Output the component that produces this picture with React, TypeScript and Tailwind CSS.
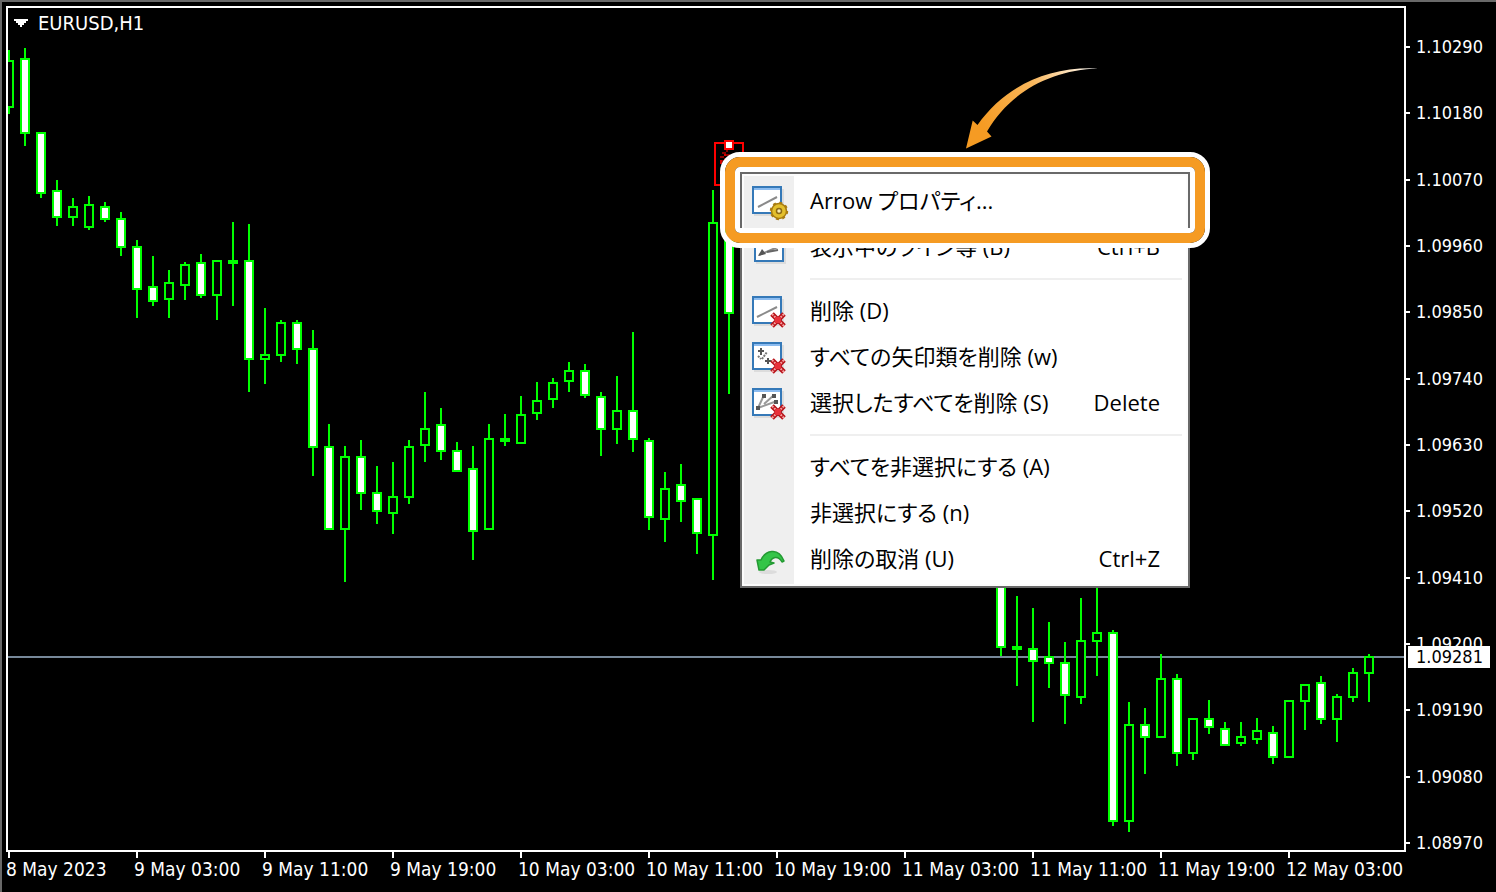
import React from "react";

type Candle = {
  x: number;
  high: number;
  top: number;
  bottom: number;
  low: number;
  bear: boolean;
};

const BAR_STEP = 16;
const FIRST_BAR = 9;

// [bar index, high, body top, body bottom, low, bearish]
const bars: [number, number, number, number, number, 0 | 1][] = [
  [0, 50, 60, 108, 114, 0],
  [1, 48, 58, 134, 146, 1],
  [2, 132, 132, 194, 198, 1],
  [3, 180, 190, 218, 226, 1],
  [4, 198, 206, 218, 226, 0],
  [5, 196, 204, 228, 230, 0],
  [6, 202, 206, 220, 222, 1],
  [7, 212, 218, 248, 256, 1],
  [8, 240, 246, 290, 318, 1],
  [9, 256, 286, 302, 306, 1],
  [10, 270, 282, 300, 318, 0],
  [11, 262, 264, 286, 300, 0],
  [12, 254, 262, 296, 298, 1],
  [13, 260, 260, 296, 320, 0],
  [14, 222, 260, 264, 306, 0],
  [15, 224, 260, 360, 392, 1],
  [16, 308, 354, 360, 384, 0],
  [17, 320, 322, 356, 362, 0],
  [18, 320, 322, 350, 364, 1],
  [19, 330, 348, 448, 476, 1],
  [20, 424, 446, 530, 530, 1],
  [21, 446, 456, 530, 582, 0],
  [22, 440, 456, 494, 510, 1],
  [23, 466, 492, 512, 524, 1],
  [24, 462, 496, 514, 534, 0],
  [25, 440, 446, 498, 504, 0],
  [26, 392, 428, 446, 462, 0],
  [27, 408, 424, 452, 460, 1],
  [28, 442, 450, 472, 472, 1],
  [29, 446, 468, 532, 560, 1],
  [30, 424, 438, 530, 530, 0],
  [31, 414, 438, 442, 446, 0],
  [32, 396, 414, 444, 444, 0],
  [33, 382, 400, 414, 420, 0],
  [34, 378, 382, 400, 408, 0],
  [35, 362, 370, 382, 392, 0],
  [36, 364, 370, 396, 398, 1],
  [37, 392, 396, 430, 456, 1],
  [38, 376, 410, 430, 444, 0],
  [39, 332, 410, 440, 452, 1],
  [40, 438, 440, 518, 530, 1],
  [41, 472, 488, 520, 542, 0],
  [42, 464, 484, 502, 522, 1],
  [43, 498, 498, 534, 554, 1],
  [44, 190, 222, 536, 580, 0],
  [45, 200, 222, 314, 394, 1],
  [62, 540, 560, 648, 656, 1],
  [63, 596, 646, 650, 686, 0],
  [64, 608, 648, 662, 722, 1],
  [65, 622, 656, 664, 688, 1],
  [66, 642, 662, 696, 724, 1],
  [67, 598, 640, 698, 704, 0],
  [68, 570, 632, 642, 676, 0],
  [69, 630, 632, 822, 826, 1],
  [70, 702, 724, 822, 832, 0],
  [71, 708, 724, 738, 774, 1],
  [72, 654, 678, 738, 738, 0],
  [73, 674, 678, 754, 766, 1],
  [74, 718, 718, 754, 760, 0],
  [75, 700, 718, 728, 734, 1],
  [76, 722, 728, 746, 746, 1],
  [77, 722, 736, 744, 746, 0],
  [78, 718, 730, 740, 744, 0],
  [79, 726, 732, 758, 764, 1],
  [80, 700, 700, 758, 758, 0],
  [81, 684, 684, 702, 730, 0],
  [82, 676, 682, 720, 724, 1],
  [83, 694, 696, 720, 742, 0],
  [84, 668, 672, 698, 702, 0],
  [85, 654, 656, 674, 702, 0],
];

const candles: Candle[] = bars.map(([i, high, top, bottom, low, bear]) => ({
  x: FIRST_BAR + i * BAR_STEP,
  high,
  top,
  bottom,
  low,
  bear: bear === 1,
}));

const prices = [
  "1.10290",
  "1.10180",
  "1.10070",
  "1.09960",
  "1.09850",
  "1.09740",
  "1.09630",
  "1.09520",
  "1.09410",
  "1.09200",
  "1.09190",
  "1.09080",
  "1.08970",
];

const times = [
  "8 May 2023",
  "9 May 03:00",
  "9 May 11:00",
  "9 May 19:00",
  "10 May 03:00",
  "10 May 11:00",
  "10 May 19:00",
  "11 May 03:00",
  "11 May 11:00",
  "11 May 19:00",
  "12 May 03:00",
];

type IconName = "props" | "list" | "delete" | "deleteArrows" | "deleteSelected" | "undo" | "none";

type MenuEntry = { label: string; shortcut?: string; icon: IconName } | "separator";

const menu: MenuEntry[] = [
  { label: "Arrow プロパティ...", icon: "props" },
  { label: "表示中のライン等 (B)", shortcut: "Ctrl+B", icon: "list" },
  "separator",
  { label: "削除 (D)", icon: "delete" },
  { label: "すべての矢印類を削除 (w)", icon: "deleteArrows" },
  { label: "選択したすべてを削除 (S)", shortcut: "Delete", icon: "deleteSelected" },
  "separator",
  { label: "すべてを非選択にする (A)", icon: "none" },
  { label: "非選択にする (n)", icon: "none" },
  { label: "削除の取消 (U)", shortcut: "Ctrl+Z", icon: "undo" },
];

// Small window that most of the menu icons share
const WindowShape = ({ y = 7, x = 8 }: { y?: number; x?: number }) => (
  <>
    <rect x={x + 2} y={y + 3} width="30" height="27" fill="#dcdcdc" />
    <rect x={x + 1} y={y + 1} width="28" height="26" fill="#fff" stroke="#3579b8" strokeWidth="2" />
    <rect x={x + 2} y={y + 2} width="26" height="2" fill="#8cbcf0" />
  </>
);

const RedCross = () => (
  <>
    <path d="M28 25L40 37M40 25L28 37" stroke="#b8141a" strokeWidth="5" />
    <path d="M28 25L40 37M40 25L28 37" stroke="#f4a0a0" strokeWidth="2" strokeDasharray="2 1" />
    <rect x="31" y="28" width="6" height="6" fill="#e8303a" />
  </>
);

const MenuIcon = ({ name }: { name: IconName }) => (
  <svg viewBox="0 0 50 46" className="h-[46px] w-[50px] shrink-0" aria-hidden="true">
    {name === "props" && (
      <>
        <WindowShape />
        <path d="M14 28L33 18" stroke="#8a8a8a" strokeWidth="2" />
        <circle cx="35" cy="32" r="7.5" fill="#e3bf2c" stroke="#a87c12" strokeWidth="1.5" />
        <circle cx="35" cy="32" r="8.2" fill="none" stroke="#a87c12" strokeWidth="2" strokeDasharray="3 3.44" />
        <circle cx="35" cy="32" r="2.5" fill="#f8ecb0" stroke="#8c6a14" strokeWidth="1.5" />
      </>
    )}
    {name === "list" && (
      <>
        <WindowShape x={10} y={9} />
        <path d="M15 30L36 21" stroke="#8a8a8a" strokeWidth="2" />
        <path d="M14 31L18 24L22 29Z" fill="#555" />
        <path d="M23 27L34 25" stroke="#666" strokeWidth="2" />
      </>
    )}
    {name === "delete" && (
      <>
        <WindowShape />
        <path d="M13 28L33 18" stroke="#8a8a8a" strokeWidth="2" />
        <RedCross />
      </>
    )}
    {name === "deleteArrows" && (
      <>
        <WindowShape />
        <path d="M17 13V20M14 16H20M24 23V29M21 26H28" stroke="#555" strokeWidth="2" />
        <path d="M14 21L17 24M18 24L23 17" stroke="#777" strokeWidth="2" strokeDasharray="2 1" />
        <RedCross />
      </>
    )}
    {name === "deleteSelected" && (
      <>
        <WindowShape />
        <path d="M14 27L33 20M14 27L20 14M20 23L30 14" stroke="#999" strokeWidth="2" />
        <path d="M12 25h4v4h-4zM18 13h4v4h-4zM28 13h4v4h-4zM30 19h4v4h-4z" fill="#555" />
        <RedCross />
      </>
    )}
    {name === "undo" && (
      <>
        <ellipse cx="24" cy="35" rx="9" ry="2" fill="#dcdcdc" />
        <path
          d="M13 23L17 23C21 14 34 9 40 24L38 25C34 18 28 20 26 25L30 26L25 28L20 33L15 33Z"
          fill="#34c548"
          stroke="#239a32"
          strokeWidth="1.5"
          strokeLinejoin="round"
        />
      </>
    )}
  </svg>
);

const PriceChart = () => (
  <svg viewBox="8 8 1396 842" className="block h-auto w-full" role="img" aria-label="EURUSD H1">
    <defs>
      <linearGradient id="arrowFade" x1="1098" y1="68" x2="985" y2="130" gradientUnits="userSpaceOnUse">
        <stop offset="0" stopColor="#fff" />
        <stop offset="0.5" stopColor="#f9b75c" />
        <stop offset="1" stopColor="#f59b23" />
      </linearGradient>
    </defs>
    <g shapeRendering="crispEdges">
      <rect x="8" y="656" width="1396" height="2" fill="#778899" />
      {candles.map((c) => (
        <g key={c.x}>
          <rect x={c.x - 1} y={c.high} width="2" height={c.low - c.high} fill="#00ff00" />
          <rect x={c.x - 5} y={c.top} width="10" height={c.bottom - c.top} fill="#00ff00" />
          {c.bottom - c.top > 4 && (
            <rect
              x={c.x - 3}
              y={c.top + 2}
              width="6"
              height={c.bottom - c.top - 4}
              fill={c.bear ? "#fff" : "#000"}
            />
          )}
        </g>
      ))}

      {/* selected arrow object */}
      <rect x="715" y="143" width="28" height="42" fill="none" stroke="#f00" strokeWidth="2" />
      <path
        d="M726 150h2v2h-2zM722 152h4v2h-4zM726 154h4v2h-4zM720 156h4v2h-4zM722 160h2v2h-2zM724 158h4v2h-4z"
        fill="#8b0000"
      />
      <path d="M720 160h2v4h-2zM724 154h2v2h-2z" fill="#d00000" />
      <rect x="725" y="141" width="8" height="8" fill="#fff" stroke="#f00" strokeWidth="2" />
    </g>
    <path
      d="M966 148.500L972.700 120.500L977.500 125C1004 87 1047 66 1098 68.500C1050 70 1009 93 987 131.500L991.500 136.500Z"
      fill="url(#arrowFade)"
    />
  </svg>
);

const ContextMenu = () => (
  <div
    role="menu"
    className="absolute left-[732px] top-[164px] w-[450px] border-2 border-[#696969] bg-[#fcfcfc] p-0.5 font-['Open_Sans','Noto_Sans_CJK_JP',sans-serif] text-[22px] text-black"
  >
    <div className="bg-[linear-gradient(to_right,#efefef_50px,#ffffff_50px)] pb-px pt-[3px]">
      {menu.map((entry, i) =>
        entry === "separator" ? (
          <div key={i} role="separator" className="ml-[66px] mr-1 flex h-[18px] flex-col justify-center pb-0.5">
            <div className="h-0.5 bg-[#efefef]" />
          </div>
        ) : (
          <button
            key={i}
            type="button"
            role="menuitem"
            className="flex h-[46px] w-full items-center pr-[26px] text-left leading-[42px]"
          >
            <MenuIcon name={entry.icon} />
            <span className="flex-1 whitespace-nowrap pb-1 pl-4 [font-feature-settings:'palt']">
              {entry.label}
            </span>
            {entry.shortcut && <span className="pb-1">{entry.shortcut}</span>}
          </button>
        )
      )}
    </div>
  </div>
);

// Frame that draws attention to the first menu entry
const Highlight = () => (
  <div className="pointer-events-none absolute left-[712px] top-[144px] h-24 w-[490px] rounded-[20px] border-[5px] border-white">
    <div className="h-full rounded-[15px] border-[10px] border-[#f59b23]">
      <div className="h-full rounded-[5px] border-[5px] border-white" />
    </div>
  </div>
);

const App: React.FC = () => {
  return (
    <main className="flex min-h-screen flex-col overflow-hidden border-l-2 border-t-2 border-[#696969] bg-black pl-1 pt-1 font-['DejaVu_Sans_Condensed','DejaVu_Sans',sans-serif] text-lg text-white">
      <div className="flex">
        <section className="relative flex-1 border-2 border-white">
          <PriceChart />
          <h1 className="absolute left-1.5 top-[3px] flex items-center gap-2.5 text-xl leading-6">
            <svg viewBox="0 0 14 8" className="h-2 w-3.5" shapeRendering="crispEdges" aria-hidden="true">
              <path d="M0 0H14V2H12V4H10V6H8V8H6V6H4V4H2V2H0Z" fill="#fff" />
            </svg>
            EURUSD,H1
          </h1>
          <ContextMenu />
          <Highlight />
        </section>

        <aside className="relative flex w-[90px] flex-col justify-between pt-8">
          {prices.map((p) => (
            <div key={p} className="flex h-[18px] items-center gap-1.5 leading-[18px]">
              <span className="h-0.5 w-1 bg-white" />
              {p}
            </div>
          ))}
          <div className="absolute left-0.5 top-[640px] w-[82px] bg-white pl-2 leading-[22px] text-black">
            1.09281
          </div>
        </aside>
      </div>

      <footer className="grid h-10 grid-cols-11 pr-[82px] text-[19px]">
        {times.map((t) => (
          <div key={t} className="whitespace-nowrap leading-[22px]">
            <div className="ml-0.5 h-1.5 w-0.5 bg-white" />
            {t}
          </div>
        ))}
      </footer>
    </main>
  );
};

export default App;
